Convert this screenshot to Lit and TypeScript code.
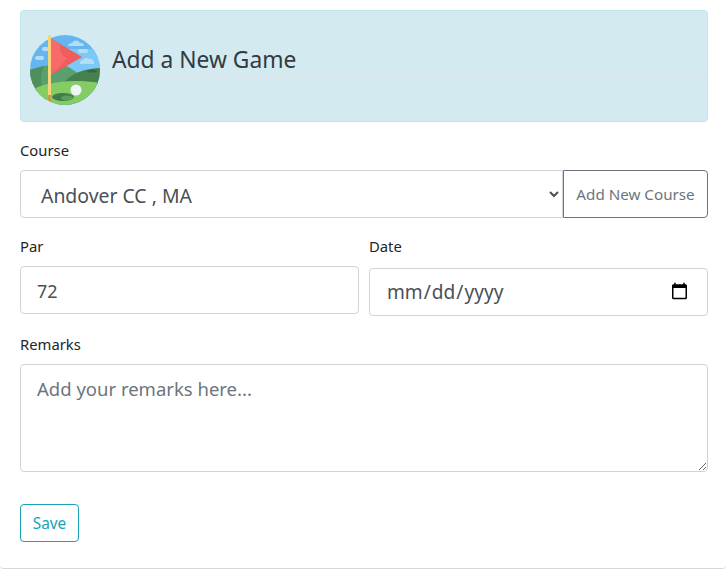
import { LitElement, html, css } from "lit";
import { customElement } from "lit/decorators.js";

@customElement("app-root")
export class AppRoot extends LitElement {
  static styles = css`
    :host { display: block; font-family: "Noto Sans", "Open Sans", sans-serif; color: #212529; }
    * { box-sizing: border-box; }
    .page { height: 569px; padding: 10px 18px 0 20px; border-bottom: 1px solid #d8d8d8; border-radius: 0 0 4px 4px; background: #fff; }
    .alert { height: 112px; background: #d3eaf1; border: 1px solid #bee5eb; border-radius: 4px; padding: 0 0 0 9px; display: flex; align-items: flex-start; gap: 11px; }
    .alert svg { flex: none; width: 70px; height: 70px; margin-top: 24px; }
    .head { flex: 1; padding-top: 33px; }
    h4 { margin: 0 0 0 1px; padding-top: 1px; font-size: 22.8px; line-height: 30px; font-weight: 400; color: #343a40; }
    hr { margin: 1px 0 0; border: 0; border-top: 1px solid #dde2e8; }
    label { display: block; font-size: 14.8px; line-height: 20px; margin-bottom: 10px; }
    .course { margin-top: 18px; }
    .ig { display: flex; }
    select, input, textarea { font-family: inherit; color: #495057; border: 1px solid #ced4da; border-radius: 4px; background: #fff; font-size: 18px; }
    select { flex: 1; min-width: 0; height: 48px; padding: 2px 16px 0; border-radius: 4px 0 0 4px; font-size: 19.4px; }
    .add { width: 145px; height: 48px; flex: none; font: inherit; font-size: 15.2px; color: #6c757d; background: #fff; border: 1px solid #6c757d; border-radius: 0 4px 4px 0; padding: 0; }
    .row { display: grid; grid-template-columns: 1fr 1fr; gap: 10px; margin-top: 18px; }
    .par { display: block; width: 100%; height: 48px; padding: 2px 16px 0; }
    .date-label { margin-bottom: 12px; }
    .date { display: block; width: 100%; height: 48px; padding: 0 16px; font-size: 19.1px; }
    .rem { margin-top: 18px; }
    textarea { display: block; width: 100%; height: 108px; padding: 11px 16px 8px; font-size: 18.5px; }
    textarea::placeholder { color: #6c757d; opacity: 1; }
    .save { display: block; margin-top: 32px; width: 59px; height: 38px; font: inherit; font-size: 15.4px; color: #17a2b8; background: #fff; border: 1px solid #17a2b8; border-radius: 4px; padding: 0; }
  `;

  render() {
    return html`<div class="page">
      <div class="alert">
        <svg viewBox="0 0 70 70" aria-hidden="true">
          <defs><clipPath id="c"><circle cx="35" cy="35" r="35"/></clipPath></defs>
          <g clip-path="url(#c)">
            <rect width="70" height="70" fill="#64b5f0"/>
            <path d="M28 14h42v26H28z" fill="#7cc8f8"/>
            <path d="M38 11a4 4 0 0 1 4-3 4.5 4.5 0 0 1 8 0 3 3 0 0 1 4 3z" fill="#b5dcf5"/>
            <rect x="48" y="14" width="10" height="4" rx="2" fill="#b5dcf5"/>
            <path d="M50 29a3 3 0 0 1 3-4 4 4 0 0 1 6-1 4 4 0 0 1 5 5z" fill="#b5dcf5"/>
            <rect x="5" y="21" width="9" height="4" rx="2" fill="#b5dcf5"/>
            <rect x="12" y="12" width="7" height="4" rx="2" fill="#b5dcf5"/>
            <path d="M0 35c10-4 22-6 32-5 8 1 12 7 20 10l18 2v28H0z" fill="#5a9f6e"/>
            <path d="M0 35l14-4c-4 8-4 20 2 34H0z" fill="#4e8f5a"/>
            <path d="M33 49c6-8 16-15 37-16v22z" fill="#47804f"/>
            <ellipse cx="62" cy="36" rx="5" ry="1.6" fill="#37663f"/>
            <path d="M0 56c12-8 40-13 70-8v22H0z" fill="#85cc64"/>
            <ellipse cx="33" cy="62" rx="11" ry="4" fill="#3f7d4c"/>
            <ellipse cx="37" cy="63" rx="6" ry="2.5" fill="#5c9f5c"/>
            <circle cx="46" cy="55" r="5.5" fill="#eef5f8"/>
          </g>
          <rect x="18" y="0" width="3" height="66" fill="#f5d67a"/>
          <rect x="18" y="60" width="3" height="6" fill="#b8a44e"/>
          <path d="M21 3.5l31 18.5-31 18z" fill="#f35c5c"/>
          <path d="M21 3.5l9 5.4c-1 7 2 12 8 14l-17 17.1z" fill="#f66a6a"/>
        </svg>
        <div class="head"><h4>Add a New Game</h4><hr></div>
      </div>
      <div class="course">
        <label>Course</label>
        <div class="ig">
          <select><option>Andover CC , MA</option></select>
          <button class="add">Add New Course</button>
        </div>
      </div>
      <div class="row">
        <div><label>Par</label><input class="par" value="72"></div>
        <div><label class="date-label">Date</label><input class="date" type="date"></div>
      </div>
      <div class="rem">
        <label>Remarks</label>
        <textarea placeholder="Add your remarks here..."></textarea>
      </div>
      <button class="save">Save</button>
    </div>`;
  }
}
